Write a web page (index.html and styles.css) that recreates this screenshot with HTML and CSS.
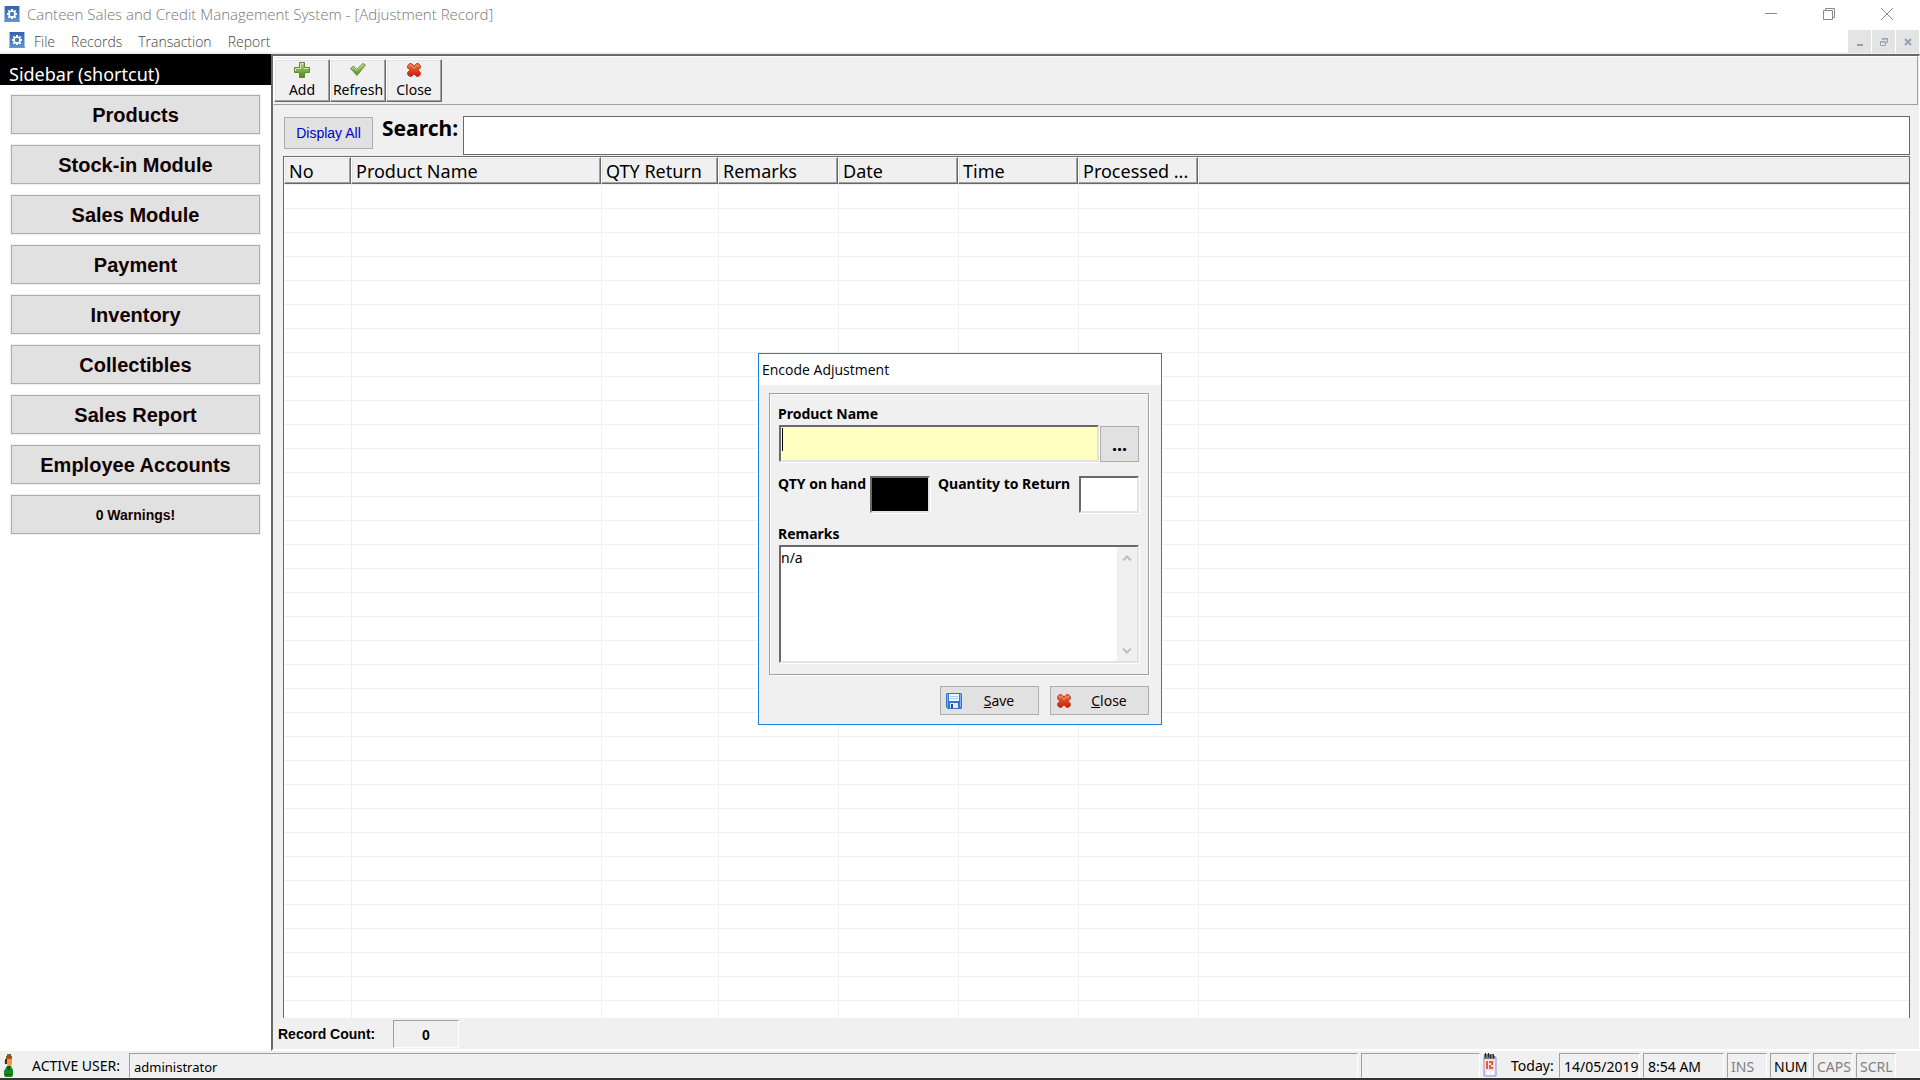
FILE: index.html
```html
<!DOCTYPE html>
<html lang="en">
<head>
<meta charset="utf-8">
<title>Canteen Sales and Credit Management System</title>
<link rel="stylesheet" href="styles.css">
</head>
<body>
<svg class="defs" aria-hidden="true">
  <defs>
    <linearGradient id="green" x1="0" y1="0" x2="0" y2="1"><stop offset="0" stop-color="#b4d276"/><stop offset="1" stop-color="#4f8a1e"/></linearGradient>
    <linearGradient id="red" x1="0" y1="0" x2="0" y2="1"><stop offset="0" stop-color="#f0703c"/><stop offset="1" stop-color="#c4200c"/></linearGradient>
    <linearGradient id="blue" x1="0" y1="0" x2="0" y2="1"><stop offset="0" stop-color="#3465a8"/><stop offset="1" stop-color="#5a90d2"/></linearGradient>
    <symbol id="gear" viewBox="0 0 16 16">
      <rect width="16" height="16" fill="#a9bfdc"/>
      <rect x="1" width="14" height="15" fill="url(#blue)"/>
      <rect y="15" width="16" height="1" fill="#7d93b5"/>
      <path fill="#fff" d="M7 3h2v1.5l1 .4 1-1.1 1.3 1.3-1 1 .4 1H13v2h-1.3l-.4 1 1 1.1-1.3 1.2-1-1-1 .4V13H7v-1.2l-1-.4-1 1-1.3-1.2 1-1.1-.4-1H3v-2h1.3l.4-1-1-1L5 3.8l1 1.1 1-.4z"/>
      <rect x="6" y="6" width="4" height="4" rx="1" fill="#4a7cbd"/>
    </symbol>
    <symbol id="plus" viewBox="0 0 16 16">
      <path d="M5.500.5h5v5h5v5h-5v5h-5v-5h-5v-5h5z" fill="url(#green)" stroke="#5c8a2c"/>
      <path d="M6.500 6.500v-5h3M1.500 9v-2.500h5M10 6.500h4.500" fill="none" stroke="#d5e8b0"/>
    </symbol>
    <symbol id="check" viewBox="0 0 16 16">
      <path d="M.5 6.500 3.500 4l3 3.500L13 1.500l2.500 1.500L7 13.500z" fill="url(#green)" stroke="#6c9440"/>
      <path d="M2 6.500l1.500-1 3 3.200L13 2.700" fill="none" stroke="#c6dc9c"/>
    </symbol>
    <symbol id="cross" viewBox="0 0 16 16">
      <path d="M3.500 1.500h2L8 4l2.500-2.500h2L14.500 4v2L12 8l2.500 2.500v2l-2 2h-2L8 12l-2.500 2.500h-2l-2-2v-2L4 8 1.500 6V4z" fill="url(#red)" stroke="#c9463e"/>
      <path d="M3 4.500 4.500 3 8 6.500 11.500 3 13 4.500" fill="none" stroke="#f5a17c"/>
    </symbol>
    <symbol id="floppy" viewBox="0 0 16 16">
      <path d="M0 1 1 0h14l1 1v14l-1 1H2l-2-2z" fill="#3472cc"/>
      <path d="M1 1h1v13H1zM14 1h1v13h-1z" fill="#7eb2ee"/>
      <path d="M3 1h10v7H3z" fill="#f5faff"/>
      <path d="M4 3h8v1H4zM4 5h8v1H4z" fill="#a9cdf0"/>
      <path d="M4 10h8v5H4z" fill="#dfe9ee"/>
      <path d="M5 11h2v4H5z" fill="#1c52a4"/>
    </symbol>
    <symbol id="person" viewBox="0 0 10 24">
      <path d="M3 1h4v2h1v3H2V3h1z" fill="#a0521c"/><path d="M4 1h1v2H4z" fill="#3a8a2a"/>
      <path d="M2 6h6v5l-1 2H4L2 10z" fill="#f59a3c"/><path d="M1 6h2v5H1z" fill="#333"/><path d="M0 8h1v2H0z" fill="#ccc"/>
      <path d="M3 13h4l2 4v5l-1 2H1l-1-2v-4z" fill="#128a1c"/><path d="M3 13h3v4H4z" fill="#1b4a48"/><path d="M1 21h7v1H1z" fill="#0a5c12"/>
    </symbol>
    <symbol id="calendar" viewBox="0 0 14 24">
      <path d="M1 4h12v19H1z" fill="#e6e8fa" stroke="#8d90cc"/>
      <path d="M1 1h9v2h2v3H1z" fill="#777"/><path d="M2 0h1v4H2zM5 0h1v4H5zM7 2h1v3H7zM10 1h1v4h-1z" fill="#222"/>
      <path d="M3 8h2v8H3zM6 8h4v4H8v2h2v2H6v-4h2v-2H6z" fill="#fa5a1e"/>
      <path d="M4 18h3v4H4zM8 18h3v4H8z" fill="#fff"/>
    </symbol>
  </defs>
</svg>
<div class="app">
  <header class="titlebar">
    <svg class="ico16"><use href="#gear"/></svg>
    <span class="titlebar-text">Canteen Sales and Credit Management System - [Adjustment Record]</span>
    <div class="window-controls">
      <button aria-label="Minimize"><svg width="12" height="12" viewBox="0 0 12 12"><path d="M0 5.500h12"/></svg></button>
      <button aria-label="Restore"><svg width="12" height="12" viewBox="0 0 12 12"><path d="M.5 2.500h9v9h-9zM2.500 2V.5h9v9H10"/></svg></button>
      <button aria-label="Close window"><svg width="12" height="12" viewBox="0 0 12 12"><path d="M0 0l12 12M12 0 0 12"/></svg></button>
    </div>
  </header>
  <nav class="menubar">
    <svg class="ico16"><use href="#gear"/></svg>
    <button>File</button><button>Records</button><button>Transaction</button><button>Report</button>
    <div class="mdi-controls">
      <button aria-label="Minimize record"><svg width="8" height="8" viewBox="0 0 8 8"><path d="M1 7h6"/></svg></button>
      <button aria-label="Restore record"><svg width="8" height="8" viewBox="0 0 8 8"><path class="thin" d="M.5 4h5v3.500h-5zM.5 3.500h5M2.500 2V.5h5v4H6M2 1h6"/></svg></button>
      <button aria-label="Close record"><svg width="8" height="8" viewBox="0 0 8 8"><path d="M1 1l6 6M7 1 1 7"/></svg></button>
    </div>
  </nav>
  <div class="workspace">
    <aside class="sidebar">
      <h2 class="sidebar-title">Sidebar (shortcut)</h2>
      <div class="shortcuts">
        <button>Products</button>
        <button>Stock-in Module</button>
        <button>Sales Module</button>
        <button>Payment</button>
        <button>Inventory</button>
        <button>Collectibles</button>
        <button>Sales Report</button>
        <button>Employee Accounts</button>
        <button class="warnings">0 Warnings!</button>
      </div>
    </aside>
    <main class="record">
      <div class="toolbar">
        <button><svg class="ico16"><use href="#plus"/></svg>Add</button>
        <button><svg class="ico16"><use href="#check"/></svg>Refresh</button>
        <button><svg class="ico16"><use href="#cross"/></svg>Close</button>
      </div>
      <div class="filter">
        <button class="display-all">Display All</button>
        <label for="search">Search:</label>
        <input id="search" type="text">
      </div>
      <div class="list">
        <table>
          <colgroup><col class="c-no"><col class="c-name"><col class="c-qty"><col class="c-std"><col class="c-std"><col class="c-std"><col class="c-std"><col></colgroup>
          <thead><tr><th>No</th><th>Product Name</th><th>QTY Return</th><th>Remarks</th><th>Date</th><th>Time</th><th>Processed ...</th><th></th></tr></thead>
          <tbody><tr><td></td><td></td><td></td><td></td><td></td><td></td><td></td><td></td></tr></tbody>
        </table>
      </div>
      <div class="count">
        <span class="count-label">Record Count:</span>
        <output class="count-value">0</output>
      </div>
    </main>
  </div>
  <footer class="statusbar">
    <div class="status-user"><svg width="10" height="24"><use href="#person"/></svg><span>ACTIVE USER:</span></div>
    <div class="panel grow">administrator</div>
    <div class="panel wide"></div>
    <div class="status-today"><svg width="14" height="24"><use href="#calendar"/></svg><span>Today:</span></div>
    <div class="panel mid">14/05/2019</div>
    <div class="panel mid">8:54 AM</div>
    <div class="panel key off">INS</div>
    <div class="panel key">NUM</div>
    <div class="panel key off">CAPS</div>
    <div class="panel key off">SCRL</div>
  </footer>
</div>

<div class="overlay">
  <form class="dialog" role="dialog" aria-labelledby="dialog-title">
    <h1 class="dialog-title" id="dialog-title">Encode Adjustment</h1>
    <div class="dialog-body">
      <div class="frame">
        <label for="product">Product Name</label>
        <div class="product-row">
          <input class="sunken product" id="product" type="text">
          <i class="caret"></i>
          <button class="browse" type="button">...</button>
        </div>
        <div class="qty-row">
          <label for="onhand">QTY on hand</label>
          <input class="sunken onhand" id="onhand" type="text">
          <label class="to-return" for="return">Quantity to Return</label>
          <input class="sunken" id="return" type="text">
        </div>
        <label for="remarks">Remarks</label>
        <div class="sunken memo">
          <textarea id="remarks">n/a</textarea>
          <div class="scroll">
            <svg width="10" height="8" viewBox="0 0 10 8"><path d="M1 6.500l4-4 4 4"/></svg>
            <svg width="10" height="8" viewBox="0 0 10 8"><path d="M1 1.500l4 4 4-4"/></svg>
          </div>
        </div>
      </div>
      <div class="actions">
        <button type="button"><svg class="ico16"><use href="#floppy"/></svg><span><u>S</u>ave</span></button>
        <button type="button"><svg class="ico16"><use href="#cross"/></svg><span><u>C</u>lose</span></button>
      </div>
    </div>
  </form>
</div>
</body>
</html>
```
FILE: styles.css
```css
* { box-sizing: border-box; }
body { margin: 0; font-family: "Noto Sans", sans-serif; font-size: 14px; color: #000; background: #fff; }
button, input, textarea { font: inherit; color: inherit; margin: 0; padding: 0; border-radius: 0; }
button { background: none; border: 0; white-space: nowrap; }
svg { display: block; flex: none; }
h1, h2 { margin: 0; font-weight: 400; }
.defs { position: absolute; width: 0; height: 0; }
.ico16 { width: 16px; height: 16px; }

.app { display: flex; flex-direction: column; height: 100vh; border-bottom: 2px solid #333; }

/* window chrome */
.titlebar { display: flex; align-items: center; flex: none; height: 30px; padding: 0 4px 2px; background: #fff; }
.titlebar-text { margin-left: 7px; font-family: "Open Sans", "Noto Sans", sans-serif; font-weight: 300; font-size: 15px; line-height: 20px; color: #777; }
.window-controls { display: flex; margin-left: auto; }
.window-controls button { display: flex; justify-content: center; align-items: center; width: 58px; height: 28px; }
.window-controls path { fill: none; stroke: #8a8a8a; }
.menubar { display: flex; align-items: flex-start; flex: none; height: 24px; padding: 0 1px 0 9px; border-bottom: 2px solid #f0f0f0; }
.menubar > .ico16 { margin: 2px 9px 0 0; }
.menubar > button { margin-right: 16px; font-family: "Open Sans", "Noto Sans", sans-serif; font-weight: 300; font-size: 14px; line-height: 24px; color: #444; }
.mdi-controls { display: flex; gap: 1px; margin-left: auto; }
.mdi-controls button { display: flex; justify-content: center; align-items: center; width: 23px; height: 23px; background: #e4e4e4; }
.mdi-controls path { fill: none; stroke: #93a1b3; stroke-width: 2; }
.mdi-controls .thin { stroke-width: 1; }

.workspace { display: flex; flex: 1; min-height: 0; }

/* sidebar */
.sidebar { flex: none; width: 271px; background: #fff; }
.sidebar-title { height: 31px; padding: 6px 9px 0; background: #000; color: #fff; font-size: 18px; line-height: 28px; }
.shortcuts { display: flex; flex-direction: column; gap: 11px; padding: 10px; }
.shortcuts button { height: 39px; border: 1px solid #adadad; background: #e1e1e1; outline: 1px solid #f0f0f0; color: #100; font: bold 20px/24px "Liberation Sans", sans-serif; margin: 0 1px; }
.shortcuts .warnings { font-size: 14px; }

/* record window */
.record { display: flex; flex-direction: column; flex: 1; min-width: 0; background: #f0f0f0; border: 2px solid; border-color: #696969 #fff #fff #696969; border-right-width: 1px; }
.toolbar { display: flex; flex: none; height: 49px; margin-right: 1px; padding-top: 2px; border: 1px solid; border-color: #fff #a0a0a0 #a0a0a0 #fff; }
.toolbar button { display: flex; flex-direction: column; align-items: center; width: 56px; height: 43px; padding-top: 2px; border: 1px solid; border-color: #fff #696969 #696969 #fff; box-shadow: inset -1px -1px #a0a0a0, inset 1px 1px #e3e3e3; line-height: 24px; }
.filter { display: flex; flex: none; align-items: flex-start; height: 51px; padding: 11px 9px 0 11px; }
.display-all { width: 89px; height: 32px; margin-top: 1px; border: 1px solid #adadad; background: #e1e1e1; color: #0000c0; font-family: "Liberation Sans", sans-serif; }
.filter label { width: 90px; padding-left: 9px; font-weight: 700; font-size: 21px; line-height: 25px; }
.filter input { flex: 1; min-width: 0; height: 39px; border: 1px solid #696969; background: #fff; }
.list { flex: 1; min-height: 0; overflow: hidden; margin: 0 9px 0 10px; border: 1px solid #696969; border-bottom: 0; background: #fff; }
table { width: 100%; height: 100%; table-layout: fixed; border-collapse: separate; border-spacing: 0; }
.c-no { width: 67px; }
.c-name { width: 250px; }
.c-qty { width: 117px; }
.c-std { width: 120px; }
th { height: 27px; padding: 0 0 0 4px; text-align: left; font-weight: 400; font-size: 18px; line-height: 24px; white-space: nowrap; overflow: hidden; background: #f0f0f0; border: 1px solid; border-color: #fff #696969 #696969 #fff; box-shadow: inset -1px -1px #a0a0a0, inset 1px 1px #e3e3e3; }
th:last-child { border-right: 0; box-shadow: inset 0 -1px #a0a0a0, inset 1px 1px #e3e3e3; }
td { padding: 0; border: 0 solid #f0f0f0; border-width: 1px 0 0 1px; background: repeating-linear-gradient(to bottom, #fff 0 23px, #f0f0f0 23px 24px); }
td:first-child { border-left: 0; }
.count { display: flex; flex: none; height: 31px; padding: 2px 0 0 5px; font: bold 14px/28px "Liberation Sans", sans-serif; }
.count-label { width: 115px; }
.count-value { width: 66px; height: 28px; border: 1px solid; border-color: #a0a0a0 #fff #fff #a0a0a0; text-align: center; }

/* status bar */
.statusbar { display: flex; flex: none; gap: 3px; height: 27px; padding: 2px 24px 0 0; background: #f0f0f0; line-height: 26px; white-space: nowrap; }
.status-user { display: flex; gap: 18px; width: 126px; padding-left: 4px; }
.status-today { display: flex; gap: 14px; width: 73px; }
.panel { flex: none; padding-left: 4px; border: 1px solid; border-color: #a0a0a0 #fff transparent #a0a0a0; line-height: 26px; }
.grow { flex: 1; min-width: 0; font-size: 13px; }
.wide { width: 119px; }
.mid { width: 81px; }
.key { width: 40px; padding-left: 3px; }
.off { color: #808080; }

/* dialog */
.overlay { position: fixed; inset: 0; display: flex; align-items: center; justify-content: center; padding-bottom: 2px; }
.dialog { width: 404px; border: 1px solid #1883d7; background: #f0f0f0; }
.dialog-title { padding: 0 3px; background: #fff; font-family: "Open Sans", "Noto Sans", sans-serif; font-size: 14px; line-height: 31px; }
.dialog-body { padding: 8px 12px 9px 10px; }
.frame { padding: 10px 9px 11px; border: 1px solid #a0a0a0; box-shadow: 1px 1px #fff, inset 1px 1px #fff; }
.frame label { display: block; line-height: 20px; font-weight: 700; font-size: 14px; white-space: nowrap; margin-left: -1px; }
.sunken { border: 2px solid; border-color: #696969 #e3e3e3 #e3e3e3 #696969; background: #fff; box-shadow: 1px 1px #fff; }
.product-row { position: relative; display: flex; gap: 1px; margin-top: 1px; }
.product { flex: 1; min-width: 0; height: 37px; background: #ffffc1; }
.caret { position: absolute; left: 3px; top: 3px; width: 1px; height: 23px; background: #000; }
.browse { width: 39px; height: 36px; margin-top: 1px; border: 1px solid #adadad; background: #e1e1e1; font-weight: 700; font-size: 18px; }
.qty-row { display: grid; grid-template-columns: 91px 60px 149px 60px; margin: 12px 0 11px; }
.qty-row input { width: 60px; height: 37px; margin-top: 2px; }
.qty-row .onhand { background: #000; }
.frame .to-return { margin-left: 8px; }
.memo { display: flex; height: 118px; margin-top: 1px; }
.memo textarea { flex: 1; min-width: 0; border: 0; outline: 0; resize: none; overflow: hidden; background: #fff; line-height: 22px; }
.scroll { display: flex; flex-direction: column; justify-content: space-between; align-items: center; width: 20px; padding: 7px 0 6px; background: #f0f0f0; }
.scroll path { fill: none; stroke: #bfbfbf; stroke-width: 2; }
.actions { display: flex; justify-content: flex-end; gap: 11px; margin-top: 11px; }
.actions button { display: flex; align-items: center; width: 99px; height: 29px; padding-left: 5px; border: 1px solid #adadad; background: #e1e1e1; color: #100; }
.actions span { flex: 1; padding-right: 2px; text-align: center; }
```
